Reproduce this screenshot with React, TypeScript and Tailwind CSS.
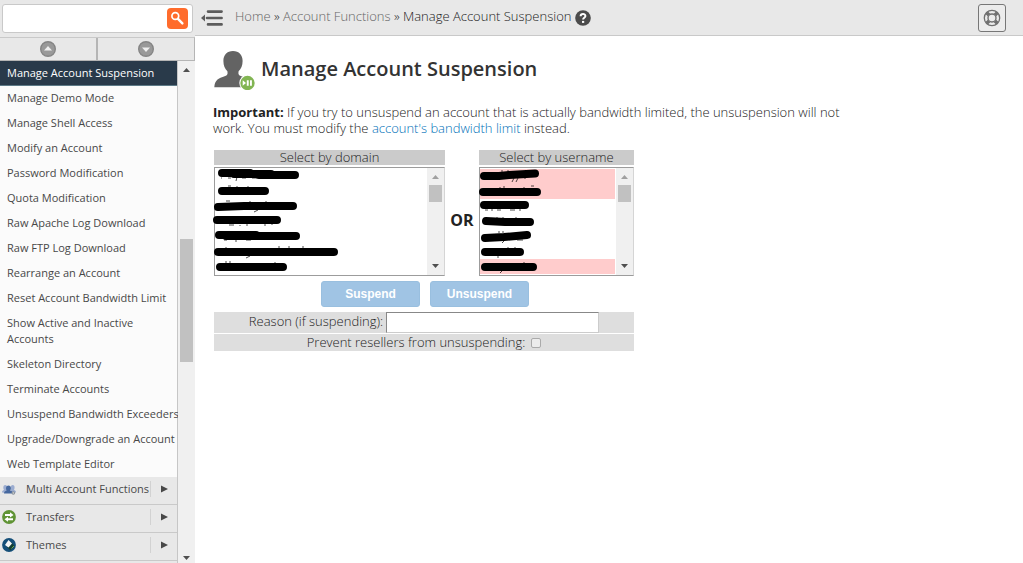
import React from "react";

const accountFunctions = [
  "Manage Account Suspension",
  "Manage Demo Mode",
  "Manage Shell Access",
  "Modify an Account",
  "Password Modification",
  "Quota Modification",
  "Raw Apache Log Download",
  "Raw FTP Log Download",
  "Rearrange an Account",
  "Reset Account Bandwidth Limit",
  "Show Active and Inactive Accounts",
  "Skeleton Directory",
  "Terminate Accounts",
  "Unsuspend Bandwidth Exceeders",
  "Upgrade/Downgrade an Account",
  "Web Template Editor",
];

function SearchIcon() {
  return (
    <svg viewBox="0 0 21 21" className="h-[21px] w-[21px]" fill="none" aria-hidden="true">
      <rect width="21" height="21" rx="4" fill="#ff6c2c" />
      <circle cx="8.3" cy="8" r="3.4" stroke="#fff" strokeWidth="1.7" />
      <path d="M11 10.8 15.4 15.4" stroke="#fff" strokeWidth="2.4" strokeLinecap="round" />
    </svg>
  );
}

function RoundArrow({ down = false }: { down?: boolean }) {
  return (
    <svg viewBox="0 0 16 16" className="h-4 w-4" aria-hidden="true">
      <circle cx="8" cy="8" r="7.3" fill="#999" stroke="#858585" strokeWidth="1.4" />
      <path d={down ? "M4 6.5h8L8 11z" : "M4 9.5h8L8 5z"} fill="#efefef" />
    </svg>
  );
}

function CollapseIcon() {
  return (
    <svg viewBox="0 0 22 16" className="h-4 w-[22px]" aria-hidden="true">
      <path d="M0 8 4 4.5v7z" fill="#5c5c5c" />
      <path d="M7 1.6H20.6M6 8H20.6M7 14.4H20.6" stroke="#5c5c5c" strokeWidth="2.6" strokeLinecap="round" />
    </svg>
  );
}

function HelpIcon() {
  return (
    <svg viewBox="0 0 16 16" className="h-4 w-4" fill="none" aria-hidden="true">
      <circle cx="8" cy="8" r="7.8" fill="#4c4c4c" />
      <path d="M5.6 6.3C5.7 3.3 10.4 3.3 10.4 6c0 1.8-2.3 1.7-2.3 3.5" stroke="#fff" strokeWidth="2" />
      <path d="M7 10.9h2.2v2H7z" fill="#fff" />
    </svg>
  );
}

function LifebuoyIcon() {
  return (
    <svg viewBox="0 0 18 18" className="h-[18px] w-[18px]" fill="none" stroke="#707070" aria-hidden="true">
      <circle cx="9" cy="9" r="7.7" strokeWidth="1.3" />
      <circle cx="9" cy="9" r="4" strokeWidth="1.4" />
      <path d="M3.7 3.7 6 6M12 6l2.3-2.3M12 12l2.3 2.3M6 12l-2.3 2.3" strokeWidth="3.6" />
    </svg>
  );
}

function SuspendUserIcon() {
  return (
    <svg viewBox="0 0 41 40" className="h-10 w-[41px]" aria-hidden="true">
      <path
        d="M19 1c-6 0-9.6 4-9.6 10 0 4.5 1.5 7.8 4 10.2.7 3-.4 4-2.2 4.8C4 28.500.8 30 .3 37.300h37.400C37.200 30 34 28.500 26.800 26c-1.800-.8-2.900-1.800-2.200-4.800 2.500-2.400 4-5.700 4-10.200C28.600 5 25 1 19 1z"
        fill="#636363"
      />
      <circle cx="33.500" cy="33" r="8.200" fill="#fff" />
      <circle cx="33.500" cy="33" r="7.200" fill="#82b553" />
      <path d="M28.700 30.300v5.400l3.300-2.700zM32.800 30.200h1.900v5.600h-1.900zM36 30.200h1.900v5.600H36z" fill="#fff" />
    </svg>
  );
}

function MultiAccountIcon() {
  return (
    <svg viewBox="0 0 14 14" className="h-3.5 w-3.5" aria-hidden="true">
      <path d="M0 10.500c0-2 1-2 2-2.500C1 6.500.9 3 3.200 3S5.600 6 5 8v3zM9 11V8c-.5-2-.5-5 1.700-5S13 6 12 8c1 .5 2 .5 2 2.500z" fill="#9bacd0" />
      <path d="M2 11.500c0-2 1.200-2.200 2.700-3C3.500 6.500 4 3.500 6.500 3.500S9.500 6.500 8.300 8.500c1.500.8 2.500 1 2.500 3z" fill="#46689f" />
      <circle cx="11.300" cy="11" r="1.800" fill="#8a929b" />
      <circle cx="11.300" cy="11" r=".7" fill="#ddd" />
    </svg>
  );
}

function TransfersIcon() {
  return (
    <svg viewBox="0 0 14 14" className="h-3.5 w-3.5" aria-hidden="true">
      <circle cx="7" cy="7" r="6.900" fill="#609435" />
      <path d="M3 4h5V2.300L11.500 5 8 7.500V6H3zM11 8.300H6V6.700L2.500 9.300 6 11.800v-1.500h5z" fill="#fff" />
    </svg>
  );
}

function ThemesIcon() {
  return (
    <svg viewBox="0 0 14 14" className="h-3.5 w-3.5" aria-hidden="true">
      <circle cx="7" cy="7" r="6.900" fill="#154f79" />
      <path d="M9 4 12.500 8 8.500 12.500 5 9z" fill="#133e35" />
      <path d="M6.500 2 10 5.500 6.500 9.500 3 7z" fill="#f4f6f6" />
      <path d="M9.500 10.500 12 8" stroke="#6daa45" />
    </svg>
  );
}

function Scrollbar({ thumb, faded = false }: { thumb: string; faded?: boolean }) {
  return (
    <div className="flex w-[17px] shrink-0 flex-col items-center justify-between bg-[#f0f0f0]" aria-hidden="true">
      <div className="flex w-full flex-col items-center">
        <svg viewBox="0 0 17 17" className="h-[17px] w-[17px]">
          <path d="M5 11h7L8.500 7z" fill={faded ? "#a0a0a0" : "#505050"} />
        </svg>
        <div className={"w-[13px] bg-[#c1c1c1] " + thumb} />
      </div>
      <svg viewBox="0 0 17 17" className="h-[17px] w-[17px]">
        <path d="M5 6h7l-3.500 4z" fill="#505050" />
      </svg>
    </div>
  );
}

function NavGroup({ icon, label }: { icon: React.ReactNode; label: string }) {
  return (
    <a href="#" className="flex h-7 items-center border-b border-[#c9c9c9] bg-[#e8e8e8] pb-1 pl-0.5">
      {icon}
      <span className="ml-2.5 flex-1 whitespace-nowrap">{label}</span>
      <span className="flex h-4 w-[27px] items-center border-l border-[#d2d2d2] pl-2.5">
        <svg viewBox="0 0 8 8" className="h-2 w-2" aria-hidden="true">
          <path d="M0 0.500 7 4 0 7.500z" fill="#484848" />
        </svg>
      </span>
    </a>
  );
}

type ListProps = {
  id: string;
  label: string;
  width: string;
  strokes: string;
  traces: string;
  suspended: number[];
};

function AccountList({ id, label, width, strokes, traces, suspended }: ListProps) {
  return (
    <div className={"flex flex-col gap-0.5 " + width}>
      <label htmlFor={id} className="block h-[15px] bg-[#cbcbcb] text-center leading-[15px]">
        {label}
      </label>
      <div className="relative flex h-[109px] border border-t-[#9c9c9c] border-r-[#d5d5d5] border-b-[#9c9c9c] border-l-[#9c9c9c]">
        <select id={id} multiple size={7} className="block h-full min-w-0 flex-1 appearance-none overflow-hidden bg-white pt-px pr-px outline-none">
          {[0, 1, 2, 3, 4, 5, 6].map((row) => (
            <option
              key={row}
              value={row}
              aria-label={"Hidden account " + (row + 1)}
              className={suspended.includes(row) ? "block h-[15px] min-h-0 bg-[#ffcccc] p-0" : "block h-[15px] min-h-0 p-0"}
            />
          ))}
        </select>
        <Scrollbar faded thumb="h-[17px]" />
        <svg viewBox="0 0 130 109" className="pointer-events-none absolute -top-px -left-px h-[109px] w-[130px] overflow-visible" fill="none" stroke="#000" aria-hidden="true">
          <path d={traces} strokeWidth="1" strokeOpacity="0.7" />
          <path d={strokes} strokeWidth="8" strokeLinecap="round" strokeLinejoin="round" />
        </svg>
      </div>
    </div>
  );
}

export default function App() {
  return (
    <div className="flex h-screen overflow-hidden bg-white font-['Open_Sans',sans-serif] text-[13px] leading-4 font-light text-[#222]">
      <aside className="flex w-[195px] shrink-0 flex-col bg-[#e8e8e8]">
        <div className="px-0.5 pt-1 pb-1">
          <form className="flex h-[29px] items-center rounded-[3px] border border-[#c9c9c9] bg-white pr-1" onSubmit={(e) => e.preventDefault()}>
            <input type="text" aria-label="Search" className="h-full min-w-0 flex-1 bg-transparent px-2 outline-none" />
            <button type="submit" aria-label="Search">
              <SearchIcon />
            </button>
          </form>
        </div>
        <div className="flex h-6 border-t border-r border-b border-[#b5b5b5] border-t-[#c9c9c9]">
          <button aria-label="Previous group" className="flex flex-1 items-center justify-center border-r-2 border-[#b5b5b5]">
            <RoundArrow />
          </button>
          <button aria-label="Next group" className="flex flex-1 items-center justify-center">
            <RoundArrow down />
          </button>
        </div>
        <div className="-mb-1 flex min-h-0 flex-1">
          <nav className="min-w-0 flex-1 border-r border-[#c6c6c6] bg-[#fbfbfb] text-[11px] font-normal text-[#484848]">
            {accountFunctions.map((name, i) => (
              <a
                key={name}
                href="#"
                className={
                  i === 0
                    ? "block border-b border-[#5d7a87] bg-[#293a4a] py-1 pl-[7px] text-white"
                    : name.startsWith("Show")
                      ? "block border-b border-transparent py-1 pl-[7px]"
                      : "block border-b border-transparent py-1 pl-[7px] whitespace-nowrap"
                }
              >
                {name}
              </a>
            ))}
            <NavGroup icon={<MultiAccountIcon />} label="Multi Account Functions" />
            <NavGroup icon={<TransfersIcon />} label="Transfers" />
            <NavGroup icon={<ThemesIcon />} label="Themes" />
            <div className="h-7 bg-[#e8e8e8]" />
          </nav>
          <Scrollbar thumb="mt-[161px] h-[123px]" />
        </div>
      </aside>

      <div className="min-w-0 flex-1">
        <header className="flex h-9 items-center border-b border-[#c9c9c9] bg-[#e8e8e8] pr-[17px] pl-1.5">
          <button aria-label="Collapse sidebar">
            <CollapseIcon />
          </button>
          <div className="ml-3 flex flex-1 items-center whitespace-nowrap">
            <span className="pb-1">
              <a href="#" className="text-[#666]">Home</a> » <a href="#" className="text-[#666]">Account Functions</a> » Manage Account Suspension
            </span>
            <a href="#" aria-label="Help" className="ml-1">
              <HelpIcon />
            </a>
          </div>
          <button aria-label="Support" className="flex h-7 w-7 items-center justify-center rounded-[3px] border border-[#777] bg-[#ececec]">
            <LifebuoyIcon />
          </button>
        </header>

        <main className="pt-3.5 pl-[18px]">
          <div className="flex items-center gap-1.5 pl-px">
            <SuspendUserIcon />
            <h1 className="pb-0.5 text-xl font-semibold text-[#333]">Manage Account Suspension</h1>
          </div>
          <p className="mt-3.5 max-w-[650px]">
            <strong className="font-bold">Important:</strong> If you try to unsuspend an account that is actually bandwidth limited, the unsuspension will not
            work. You must modify the <a href="#" className="text-[#0070b8]">account's bandwidth limit</a> instead.
          </p>

          <form className="mt-3.5 ml-px w-[420px]" onSubmit={(e) => e.preventDefault()}>
            <div className="flex">
              <AccountList
                id="domain"
                label="Select by domain"
                width="w-[231px]"
                suspended={[]}
                strokes="M8 6H36M20 7H57M45 8H81M8 24H51M4 40 30 39H79M3 53H63M5 68H42M12 69H82M4 85H120M6 100H69"
                traces="M7 11h1M14 11h3M23 10l-1 4M28 11h4M38 11h5M48 11h2M14 19h3M23 19v2M34 19v3M12 34h4M36 34v2M44 43l-4 2M52 34v1M15 58h5M26 58v1M33 57v2M50 58h2M58 57v1M10 73h3M22 73v2M32 73h5M12 80v2M36 89l-4 2M64 80h2M75 79v3M89 79v3M11 95h2M15 95h2M61 95v3"
              />
              <div className="flex flex-1 items-center justify-center pt-3.5 text-base font-bold">OR</div>
              <AccountList
                id="username"
                label="Select by username"
                width="w-[155px]"
                suspended={[0, 1, 6]}
                strokes="M5 9H20L30 8 56 6.500M4 25H58M5 38H46M7 54 26 55H51M6 71 25 70 48 68M6 85H41M6 100H54"
                traces="M23 3v3M29 3v2M35 11l-2 4M39 11l-2 4M45 11h2M21 20v2M24 20h2M45 20v2M52 19h3M6 43h3M13 42v2M18 43h4M31 43h5M41 42v2M18 50v1M24 50v1M37 50v2M20 64v2M24 64v2M25 74l-2 2M38 73h6M19 89v2M29 80v2M36 80v2M23 104l-2 2M45 95v2"
              />
            </div>
            <div className="flex justify-center gap-2.5 pt-[5px] pb-[5px] pl-0.5 font-['Liberation_Sans',sans-serif] text-xs font-bold text-white">
              <button className="h-[26px] w-[99px] rounded-[3px] border border-[#99bfdf] bg-[#a0c4e4]">Suspend</button>
              <button className="h-[26px] w-[99px] rounded-[3px] border border-[#99bfdf] bg-[#a0c4e4]">Unsuspend</button>
            </div>
            <div className="flex h-[21px] items-center justify-center gap-[3px] bg-[#dedede]">
              <label htmlFor="reason" className="pb-1">Reason (if suspending):</label>
              <input id="reason" type="text" className="h-full w-[213px] border border-[#ccc] border-t-[#888] border-l-[#888] bg-white px-1 outline-none" />
            </div>
            <div className="mt-px flex h-[17px] items-center justify-center gap-1.5 bg-[#dedede]">
              <label htmlFor="prevent" className="pb-0.5">Prevent resellers from unsuspending:</label>
              <input id="prevent" type="checkbox" className="h-2.5 w-2.5 appearance-none rounded-[2px] border border-[#aaa] bg-[#ececec]" />
            </div>
          </form>
        </main>
      </div>
    </div>
  );
}
